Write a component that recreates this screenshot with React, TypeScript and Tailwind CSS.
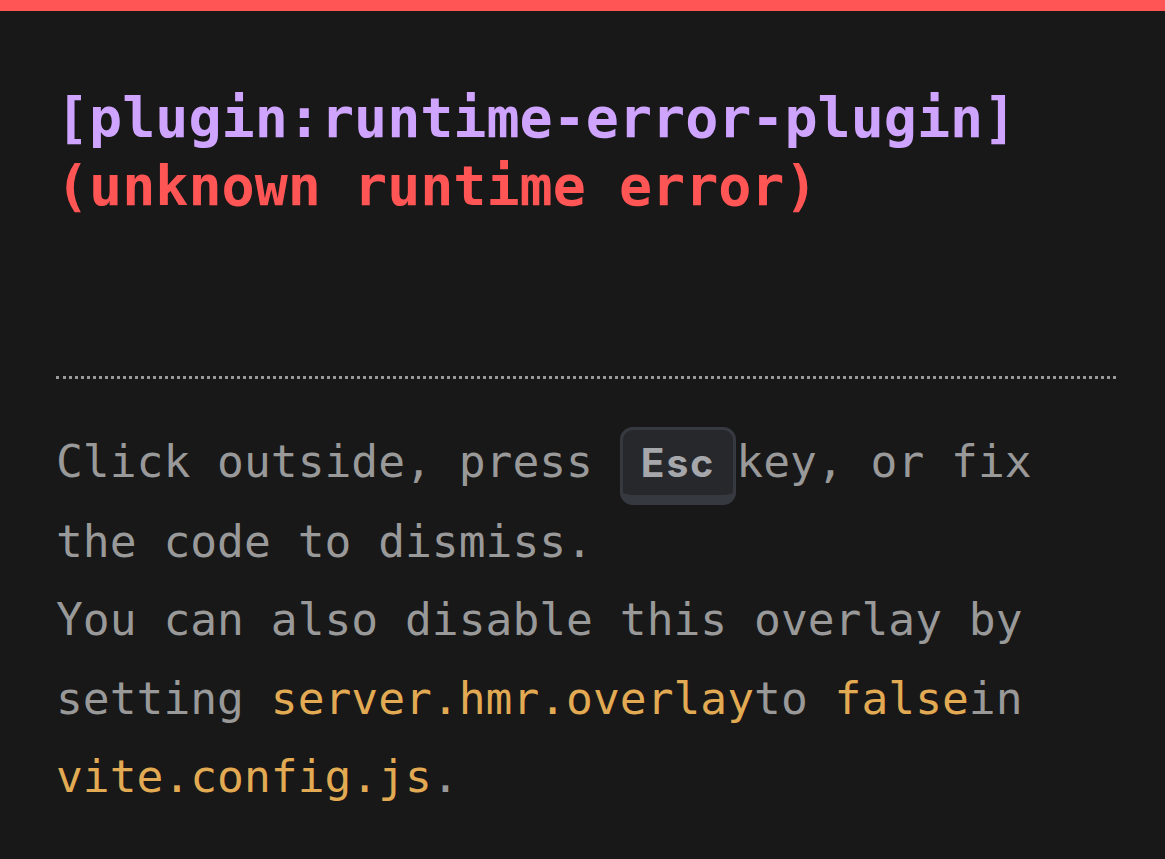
import React from "react";

const mono = "font-['DejaVu_Sans_Mono','Liberation_Mono',monospace]";

export default function App() {
  return (
    <div className="min-h-[859px] w-full bg-[#181818]">
      {/* Top accent */}
      <div className="h-[11px] bg-[#ff5555]" />

      <div className={`${mono} pl-[56px] pr-[49px]`}>
        {/* Message */}
        <div className="pt-[73px] text-[55px] leading-[68px] font-bold whitespace-pre-wrap">
          <div className="text-[#cfa4ff]">[plugin:runtime-error-plugin]</div>
          <div className="text-[#ff5555]">(unknown runtime error)</div>
        </div>

        {/* Tip */}
        <div className="mt-[156px] border-t-[3px] border-dotted border-[#999] pt-[44px] text-[44.6px] leading-[78.5px] text-[#999]">
          <div className="whitespace-pre">
            {"Click outside, press "}
            <kbd className="font-['Inter',sans-serif] text-[39px] font-bold tracking-[2px] text-[#a6a7ab] bg-[#26282c] border-[#363940] border-x-[3px] border-t-[3px] border-b-[10px] rounded-[13px] px-[18px] py-[9px]">
              Esc
            </kbd>
            {"key, or fix"}
          </div>
          <div>the code to dismiss.</div>
          <div>You can also disable this overlay by</div>
          <div className="whitespace-pre">
            {"setting "}
            <span className="text-[#e2aa53]">server.hmr.overlay</span>
            {"to "}
            <span className="text-[#e2aa53]">false</span>
            {"in"}
          </div>
          <div>
            <span className="text-[#e2aa53]">vite.config.js</span>.
          </div>
        </div>
      </div>
    </div>
  );
}
